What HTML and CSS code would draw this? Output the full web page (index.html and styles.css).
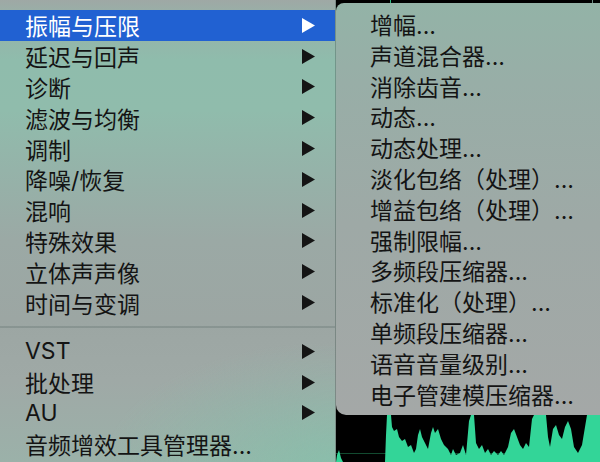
FILE: index.html
```html
<!DOCTYPE html>
<html lang="zh-CN">
<head>
<meta charset="utf-8">
<title>效果菜单</title>
<link rel="stylesheet" href="styles.css">
</head>
<body>
<div class="screen">
  <div class="menu">
    <div class="item active"><span>振幅与压限</span><svg class="arrow" viewBox="0 0 13 15"><polygon points="0,0 13,7.5 0,15"/></svg></div>
    <div class="item"><span>延迟与回声</span><svg class="arrow" viewBox="0 0 13 15"><polygon points="0,0 13,7.5 0,15"/></svg></div>
    <div class="item"><span>诊断</span><svg class="arrow" viewBox="0 0 13 15"><polygon points="0,0 13,7.5 0,15"/></svg></div>
    <div class="item"><span>滤波与均衡</span><svg class="arrow" viewBox="0 0 13 15"><polygon points="0,0 13,7.5 0,15"/></svg></div>
    <div class="item"><span>调制</span><svg class="arrow" viewBox="0 0 13 15"><polygon points="0,0 13,7.5 0,15"/></svg></div>
    <div class="item"><span>降噪/恢复</span><svg class="arrow" viewBox="0 0 13 15"><polygon points="0,0 13,7.5 0,15"/></svg></div>
    <div class="item"><span>混响</span><svg class="arrow" viewBox="0 0 13 15"><polygon points="0,0 13,7.5 0,15"/></svg></div>
    <div class="item"><span>特殊效果</span><svg class="arrow" viewBox="0 0 13 15"><polygon points="0,0 13,7.5 0,15"/></svg></div>
    <div class="item"><span>立体声声像</span><svg class="arrow" viewBox="0 0 13 15"><polygon points="0,0 13,7.5 0,15"/></svg></div>
    <div class="item"><span>时间与变调</span><svg class="arrow" viewBox="0 0 13 15"><polygon points="0,0 13,7.5 0,15"/></svg></div>
    <div class="sep"></div>
    <div class="item"><span>VST</span><svg class="arrow" viewBox="0 0 13 15"><polygon points="0,0 13,7.5 0,15"/></svg></div>
    <div class="item"><span>批处理</span><svg class="arrow" viewBox="0 0 13 15"><polygon points="0,0 13,7.5 0,15"/></svg></div>
    <div class="item"><span>AU</span><svg class="arrow" viewBox="0 0 13 15"><polygon points="0,0 13,7.5 0,15"/></svg></div>
    <div class="item"><span>音频增效工具管理器...</span></div>
  </div>
  <div class="side">
    <svg class="topstrip" viewBox="0 0 264 3" preserveAspectRatio="none">
      <rect x="0" y="0" width="264" height="3" fill="#000"/>
      <rect x="54" y="0" width="1" height="3" fill="#2fbf86"/>
      <rect x="256" y="0" width="1" height="3" fill="#6e8f84"/>
    </svg>
    <div class="submenu">
      <div class="subitem">增幅...</div>
      <div class="subitem">声道混合器...</div>
      <div class="subitem">消除齿音...</div>
      <div class="subitem">动态...</div>
      <div class="subitem">动态处理...</div>
      <div class="subitem">淡化包络（处理）...</div>
      <div class="subitem">增益包络（处理）...</div>
      <div class="subitem">强制限幅...</div>
      <div class="subitem">多频段压缩器...</div>
      <div class="subitem">标准化（处理）...</div>
      <div class="subitem">单频段压缩器...</div>
      <div class="subitem">语音音量级别...</div>
      <div class="subitem">电子管建模压缩器...</div>
    </div>
    <svg class="wave" viewBox="0 0 264 47" preserveAspectRatio="none">
      <rect x="0" y="0" width="264" height="47" fill="#000"/>
      <line x1="0" y1="38.5" x2="264" y2="38.5" stroke="#124a30" stroke-width="1"/>
      <path fill="#33d598" d="M0 47 L1 40 L3 35 L5 43 L7 47 L49 47 L50 20 L51 0 L55 0 L56 12 L58 16 L61 14 L63 22 L66 26 L69 24 L72 32 L75 30 L78 38 L80 34 L82 20 L84 14 L86 22 L89 28 L92 34 L95 18 L97 12 L99 18 L102 14 L105 24 L108 30 L112 34 L115 40 L117 34 L120 40 L124 38 L127 30 L130 40 L133 6 L135 0 L138 0 L140 28 L143 34 L146 30 L149 38 L152 34 L155 40 L158 36 L162 40 L165 36 L168 40 L172 32 L175 18 L178 14 L181 22 L184 30 L187 34 L190 28 L193 32 L196 4 L198 0 L210 0 L212 22 L214 32 L217 14 L220 10 L223 20 L226 24 L229 12 L232 6 L235 14 L238 32 L242 38 L246 30 L249 12 L251 0 L264 0 L264 47 Z"/>
    </svg>
  </div>
</div>
</body>
</html>
```

FILE: styles.css
```css
html, body {
  margin: 0;
  padding: 0;
  background: #000;
}

.screen {
  width: 600px;
  height: 462px;
  display: flex;
  overflow: hidden;
  font-family: Inter, "Noto Sans CJK SC", sans-serif;
  font-size: 23px;
  color: #141414;
}

.menu {
  box-sizing: border-box;
  width: 336px;
  height: 462px;
  flex: none;
  padding-top: 10px;
  border-right: 1px solid rgba(60, 80, 75, 0.35);
  background:
    radial-gradient(ellipse 230px 120px at 100% 100%, rgba(125, 200, 172, 0.55), rgba(125, 200, 172, 0)),
    linear-gradient(180deg, #9fa8a5 0px, #9aaea7 10px, #8fbcac 60px, #90bcac 110px, #95b3a9 170px, #9ba9a5 240px, #9ca6a3 320px, #9fa9a6 380px, #9bb1a9 462px);
}

.item {
  height: 30.8px;
  display: flex;
  align-items: center;
  justify-content: space-between;
  padding: 0 20px 0 25px;
  white-space: nowrap;
}

.item.active {
  background: #2161d2;
  color: #fff;
}

.arrow {
  width: 13px;
  height: 15px;
  flex: none;
  fill: currentColor;
}

.sep {
  height: 2px;
  margin: 8px 0;
  background: rgba(70, 85, 80, 0.22);
}

.side {
  flex: 1;
  display: flex;
  flex-direction: column;
  background: #000;
}

.topstrip {
  display: block;
  width: 264px;
  height: 3px;
  flex: none;
}

.submenu {
  height: 412px;
  box-sizing: border-box;
  flex: none;
  padding: 5.6px 0 6px;
  border-radius: 8px 0 0 10px;
  background:
    linear-gradient(180deg, #93b3a7 0px, #98aea7 80px, #9ea9a6 220px, #a4a8a7 412px);
}

.subitem {
  height: 30.8px;
  display: flex;
  align-items: center;
  padding-left: 34px;
  white-space: nowrap;
}

.wave {
  display: block;
  width: 264px;
  height: 47px;
  flex: none;
}
```
